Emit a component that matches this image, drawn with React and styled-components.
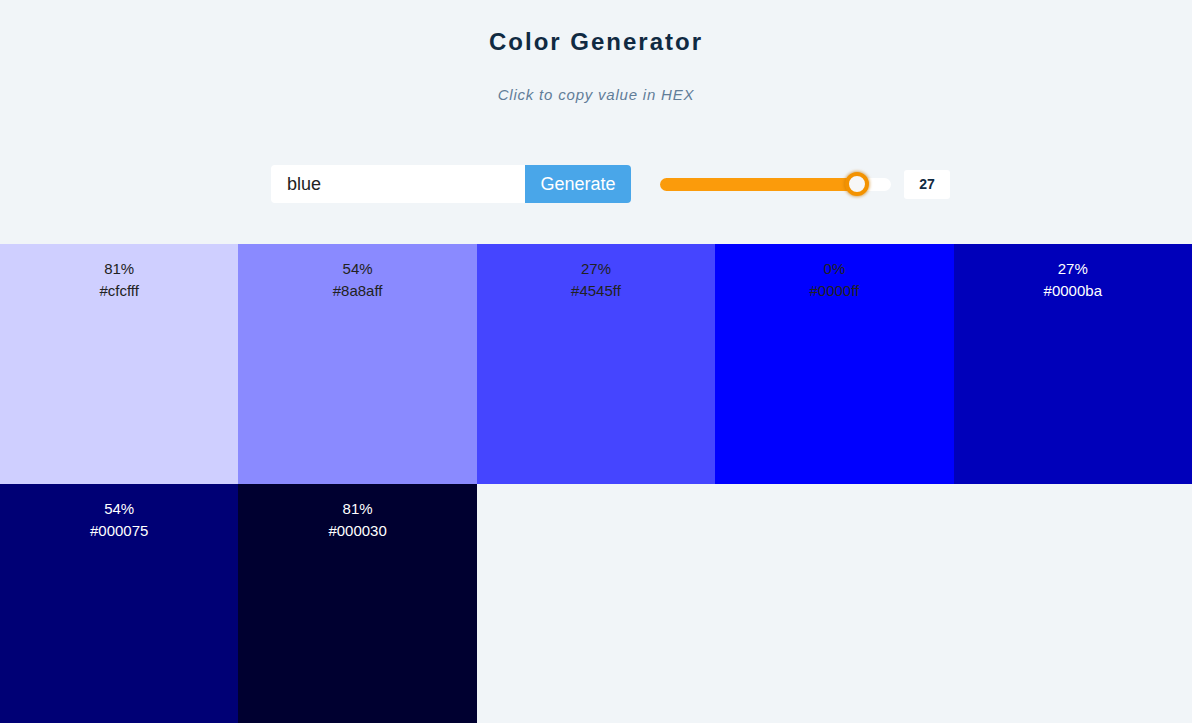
import React, { useState } from "react";
import styled, { createGlobalStyle } from "styled-components";

const Global = createGlobalStyle`
  * { box-sizing: border-box; }
  html, body { margin: 0; padding: 0; }
  body {
    background: #f1f5f8;
    font-family: "Liberation Sans", Arial, sans-serif;
    color: #222;
  }
`;

const Page = styled.main`
  display: flex;
  flex-direction: column;
  align-items: center;
  padding-top: 28px;
`;

const Title = styled.h1`
  margin: 0;
  font-size: 24px;
  line-height: 28px;
  font-weight: 700;
  letter-spacing: 2px;
  color: #102a42;
`;

const Subtitle = styled.p`
  margin: 29px 0 0;
  font-size: 15px;
  line-height: 20px;
  font-style: italic;
  letter-spacing: 0.8px;
  color: #617d98;
`;

const Controls = styled.div`
  display: flex;
  align-items: center;
  margin-top: 60px;
  margin-left: 29px;
`;

const Form = styled.form`
  display: flex;
  height: 38px;
`;

const Input = styled.input`
  width: 254px;
  height: 38px;
  border: none;
  outline: none;
  padding: 0 16px;
  font-family: inherit;
  font-size: 18px;
  color: #222;
  background: #fff;
  border-radius: 4px 0 0 4px;
`;

const Button = styled.button`
  width: 106px;
  height: 38px;
  border: none;
  background: #49a6e9;
  color: #fff;
  font-family: inherit;
  font-size: 18px;
  border-radius: 0 4px 4px 0;
  cursor: pointer;
`;

const SliderWrap = styled.div`
  position: relative;
  width: 231px;
  height: 24px;
  margin-left: 29px;
  display: flex;
  align-items: center;
`;

const Track = styled.div`
  width: 100%;
  height: 13px;
  border-radius: 7px;
  background: #fff;
  overflow: hidden;
  display: flex;
`;

const Fill = styled.div`
  height: 100%;
  background: #fb9b0b;
`;

const Thumb = styled.div`
  position: absolute;
  top: 0;
  width: 24px;
  height: 24px;
  border-radius: 50%;
  background: #f7f7f7;
  border: 4px solid #f39200;
  box-shadow: 0 0 3px 1px rgba(200, 120, 0, 0.55);
`;

const ValueBox = styled.div`
  margin-left: 13px;
  width: 46px;
  height: 29px;
  background: #fff;
  border-radius: 3px;
  display: flex;
  align-items: center;
  justify-content: center;
  font-size: 14px;
  font-weight: 700;
  color: #102a42;
`;

const Grid = styled.section`
  width: 100%;
  margin-top: 41px;
  display: grid;
  grid-template-columns: repeat(5, 1fr);
  grid-auto-rows: 240px;
`;

const Tile = styled.article`
  padding-top: 14px;
  text-align: center;
  font-size: 15px;
  line-height: 22px;
  background: ${(p) => p.$bg};
  color: ${(p) => (p.$light ? "#fff" : "#222")};
  cursor: pointer;
`;

const Line = styled.p`
  margin: 0;
`;

const colors = [
  { w: 81, hex: "#cfcfff" },
  { w: 54, hex: "#8a8aff" },
  { w: 27, hex: "#4545ff" },
  { w: 0, hex: "#0000ff" },
  { w: 27, hex: "#0000ba" },
  { w: 54, hex: "#000075" },
  { w: 81, hex: "#000030" },
];

export default function App() {
  const [color, setColor] = useState("blue");
  const value = 27;
  const pos = 185; // thumb left in px
  return (
    <>
      <Global />
      <Page>
        <Title>Color Generator</Title>
        <Subtitle>Click to copy value in HEX</Subtitle>
        <Controls>
          <Form onSubmit={(e) => e.preventDefault()}>
            <Input value={color} onChange={(e) => setColor(e.target.value)} />
            <Button type="submit">Generate</Button>
          </Form>
          <SliderWrap>
            <Track>
              <Fill style={{ width: pos + 12 }} />
            </Track>
            <Thumb style={{ left: pos }} />
          </SliderWrap>
          <ValueBox>{value}</ValueBox>
        </Controls>
        <Grid>
          {colors.map((c, i) => (
            <Tile key={i} $bg={c.hex} $light={i > 3}>
              <Line>{c.w}%</Line>
              <Line>{c.hex}</Line>
            </Tile>
          ))}
        </Grid>
      </Page>
    </>
  );
}
